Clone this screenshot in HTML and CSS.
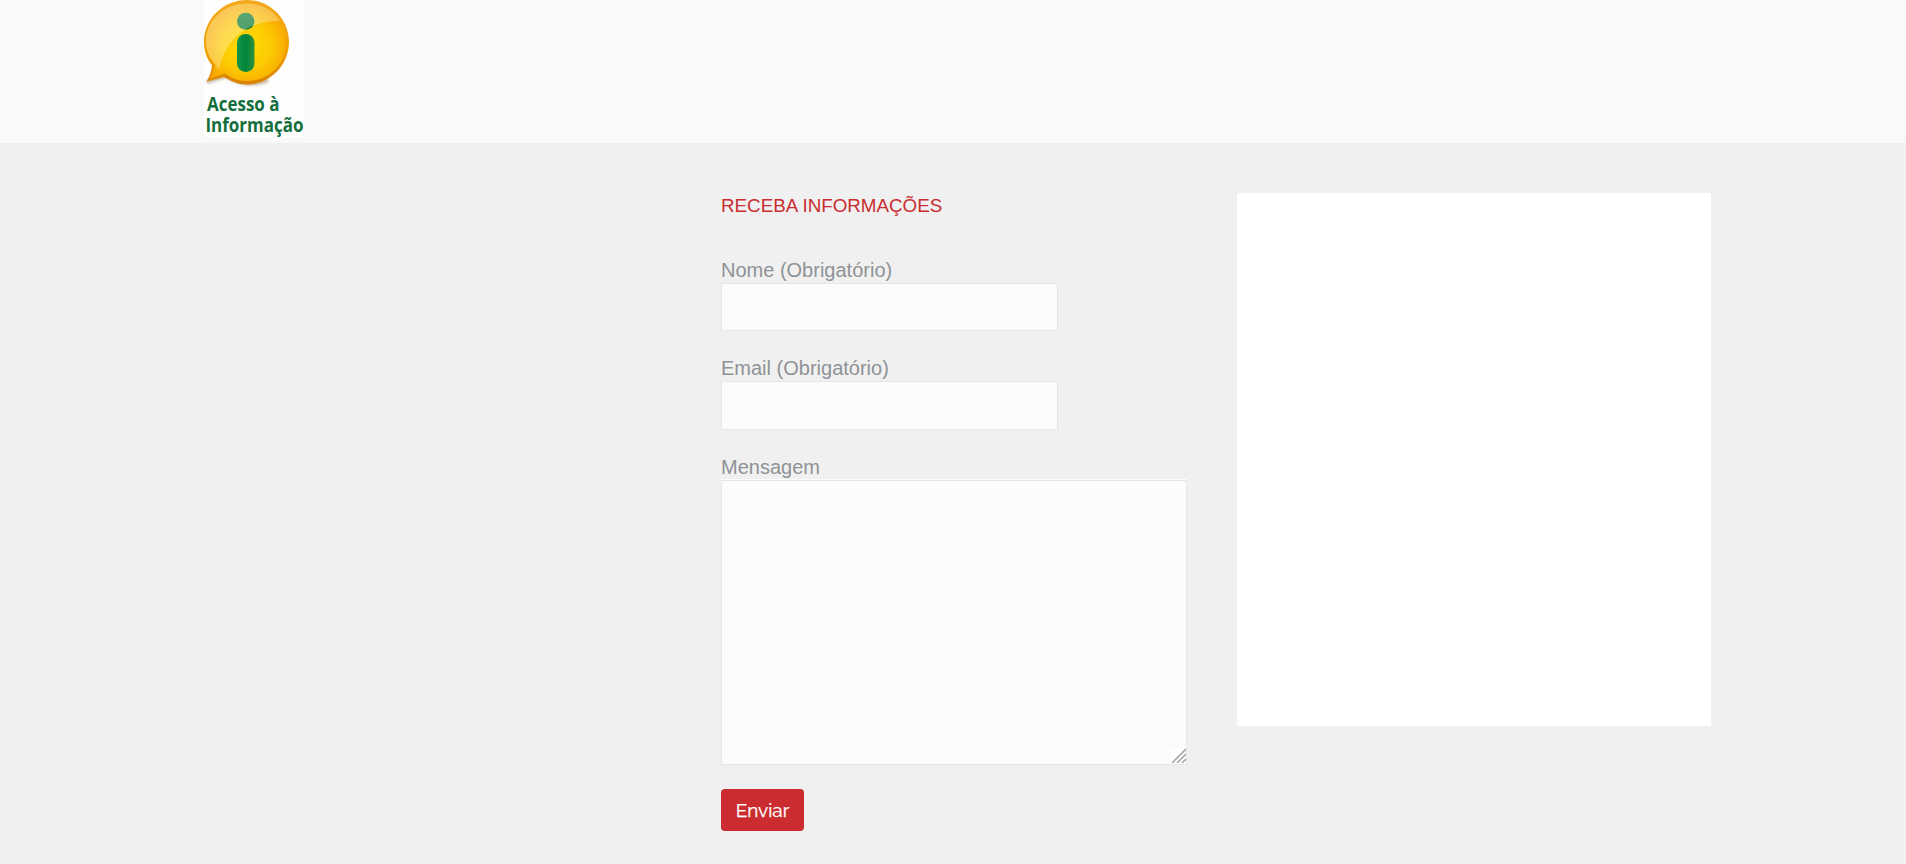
FILE: index.html
```html
<!DOCTYPE html>
<html lang="pt-BR">
<head>
<meta charset="utf-8">
<title>Acesso à Informação</title>
<link rel="stylesheet" href="styles.css">
</head>
<body>
<header class="header">
  <svg class="logo" viewBox="0 0 100 137" role="img" aria-label="Acesso à Informação">
    <defs>
      <radialGradient id="ball" cx=".5" cy=".55" r=".55"><stop offset="0" stop-color="#ffdc00"/><stop offset=".55" stop-color="#fdcb03"/><stop offset="1" stop-color="#f7a600"/></radialGradient>
      <linearGradient id="rim" x1="0" y1="0" x2="0" y2="1"><stop offset="0" stop-color="#f3a81c"/><stop offset=".6" stop-color="#f2a000"/><stop offset="1" stop-color="#d98200"/></linearGradient>
      <linearGradient id="shine" x1="0" y1="0" x2=".7" y2="1"><stop offset="0" stop-color="#fff" stop-opacity=".38"/><stop offset="1" stop-color="#fff" stop-opacity=".22"/></linearGradient>
      <linearGradient id="stem"><stop offset="0" stop-color="#159447"/><stop offset=".5" stop-color="#00853b"/><stop offset="1" stop-color="#2f923a"/></linearGradient>
      <filter id="soft" x="-20%" y="-100%" width="140%" height="300%"><feGaussianBlur stdDeviation="1.5"/></filter>
    </defs>
    <rect width="100" height="137" fill="#fefefe"/>
    <path d="M3 82 22 76Q42 89 64 80" fill="none" stroke="#b9a98a" stroke-width="3" filter="url(#soft)"/>
    <path d="M43 0C66 0 85 19 85 42S66 84.500 43 84.500C34 84.500 27 81 20 77L2.500 81.500C6 76 7.500 71 8 65C3 59 0 51 0 42C0 19 19 0 43 0Z" fill="url(#rim)"/>
    <path d="M43 3.500C65 3.500 82 20 82 42S65 81 43 81C34 81 27 78 21 73.500L5.500 79Q10 72 10.500 64C5 58 2 50 2 42C2 20 20 3.500 43 3.500Z" fill="url(#ball)"/>
    <ellipse cx="41.700" cy="21.300" rx="8.700" ry="8.500" fill="#08782f"/>
    <rect x="33" y="34" width="17.500" height="38" rx="8.500" fill="url(#stem)"/>
    <path d="M11 64C5 58 2 50 2 42C2 20 20 3.500 43 3.500C57 3.500 69 10 76 21C50 20 22 34 15 70Z" fill="url(#shine)"/>
    <g class="logo-text">
      <text x="3" y="110.500" textLength="72.500" lengthAdjust="spacingAndGlyphs">Acesso à</text>
      <text x="1.500" y="131.500" textLength="98" lengthAdjust="spacingAndGlyphs">Informação</text>
    </g>
  </svg>
</header>
<main class="main">
  <section class="contact">
    <h4 class="title">RECEBA INFORMAÇÕES</h4>
    <form class="form">
      <label class="field">Nome (Obrigatório)<input class="input" type="text"></label>
      <label class="field field-email">Email (Obrigatório)<input class="input" type="email"></label>
      <label class="field field-message">Mensagem<textarea class="input textarea"></textarea>
        <svg class="grip" viewBox="0 0 15 15" aria-hidden="true"><rect width="15" height="15" fill="#fff"/><path d="M1 15 15 1M6 15 15 6M11 15 15 11" stroke="#a8a8a8" stroke-width="1.700"/></svg>
      </label>
      <button class="submit" type="button">Enviar</button>
    </form>
  </section>
  <aside class="panel"></aside>
</main>
</body>
</html>
```
FILE: styles.css
```css
* { box-sizing: border-box; }
body {
  margin: 0;
  min-height: 100vh;
  overflow: hidden;
  background: #f0f0f0;
  font-family: "Liberation Sans", Arial, sans-serif;
}
.header {
  height: 143px;
  padding-left: 204px;
  background: #f9f9f9;
}
.logo {
  display: block;
  width: 100px;
  height: 137px;
}
.logo-text {
  font: 700 19.5px "Open Sans", "Noto Sans", sans-serif;
  fill: #146e3c;
}
.main {
  display: grid;
  grid-template-columns: 466px 474px;
  column-gap: 50px;
  align-items: start;
  padding: 50px 0 0 721px;
}
.title {
  margin: 0;
  font-size: 18.8px;
  font-weight: 400;
  line-height: 26px;
  color: #ca2c30;
}
.form {
  display: flex;
  flex-direction: column;
  align-items: flex-start;
  padding-top: 38px;
}
.field {
  display: flex;
  flex-direction: column;
  margin-bottom: 24px;
  font-size: 20px;
  line-height: 26px;
  color: #8f9296;
}
.input {
  width: 337px;
  height: 48px;
  padding: 8px;
  border: 1px solid #e6e6e6;
  border-radius: 0;
  outline: 0;
  background: #fcfcfc;
}
.field-email .input { height: 49px; }
.field-message { position: relative; }
.textarea {
  width: 466px;
  height: 285px;
  box-shadow: 0 -1px #fcfcfc;
  resize: none;
}
.grip {
  position: absolute;
  right: 1px;
  bottom: 2px;
  width: 15px;
  height: 15px;
}
.submit {
  width: 83px;
  height: 42px;
  padding: 0;
  border: 0;
  border-radius: 4px;
  background: #ca2c30;
  color: #fff;
  font: 400 19px/42px Raleway, Lato, sans-serif;
  -webkit-text-stroke: 0.25px #fff;
}
.panel {
  height: 533px;
  background: #fff;
}
```
